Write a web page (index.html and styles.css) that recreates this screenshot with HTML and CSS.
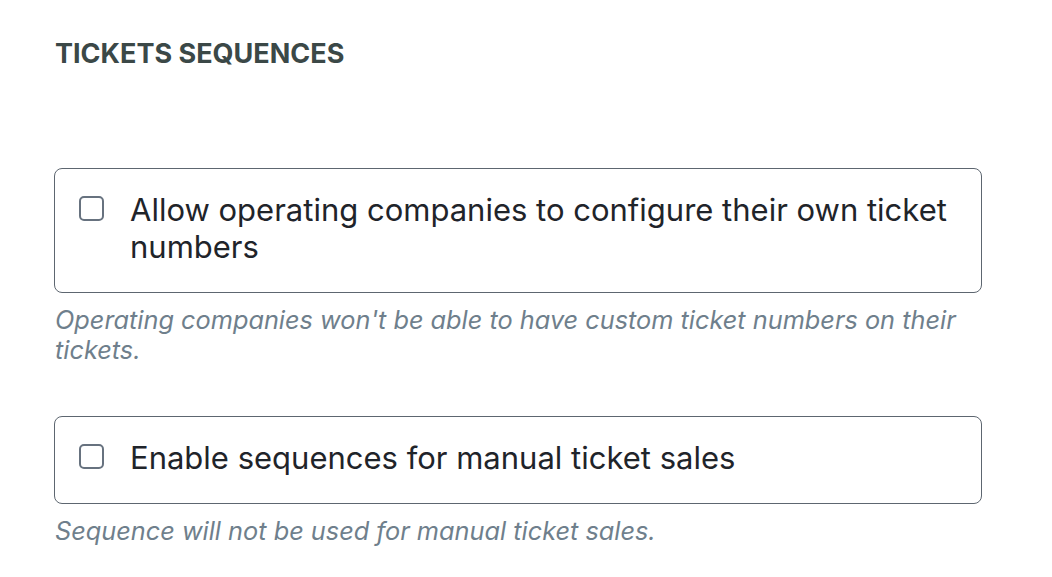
FILE: index.html
```html
<!DOCTYPE html>
<html>
<head>
<meta charset="utf-8">
<link rel="stylesheet" href="styles.css">
</head>
<body>
<main class="page">
  <h2 class="title">TICKETS SEQUENCES</h2>
  <div class="field">
    <label class="option">
      <span class="check"></span>
      <span class="label">Allow operating companies to configure their own ticket numbers</span>
    </label>
    <p class="help">Operating companies won't be able to have custom ticket numbers on their tickets.</p>
  </div>
  <div class="field">
    <label class="option">
      <span class="check"></span>
      <span class="label">Enable sequences for manual ticket sales</span>
    </label>
    <p class="help">Sequence will not be used for manual ticket sales.</p>
  </div>
</main>
</body>
</html>
```
FILE: styles.css
```css
* { box-sizing: border-box; }
html, body { margin: 0; background: #fff; }
body { font-family: Inter, "Noto Sans", sans-serif; }
.page {
  width: 982px;
  padding: 36px 0 0 54px;
}
.title {
  margin: 0 0 96px 1px;
  font-size: 27px;
  line-height: 36px;
  font-weight: 700;
  color: #3b4847;
}
.field { margin-bottom: 51px; }
.option {
  display: flex;
  align-items: flex-start;
  gap: 26px;
  border: 1px solid #5d6670;
  border-radius: 8px;
  padding: 22px 24px 27px 24px;
}
.check {
  flex: none;
  width: 25px;
  height: 25px;
  margin-top: 5px;
  border: 2px solid #67727f;
  border-radius: 5px;
}
.label {
  font-size: 31px;
  line-height: 37px;
  color: #1f242a;
}
.help {
  margin: 12px 0 0 1px;
  font-size: 25.3px;
  line-height: 30px;
  font-style: italic;
  color: #6f7f8c;
}
```
